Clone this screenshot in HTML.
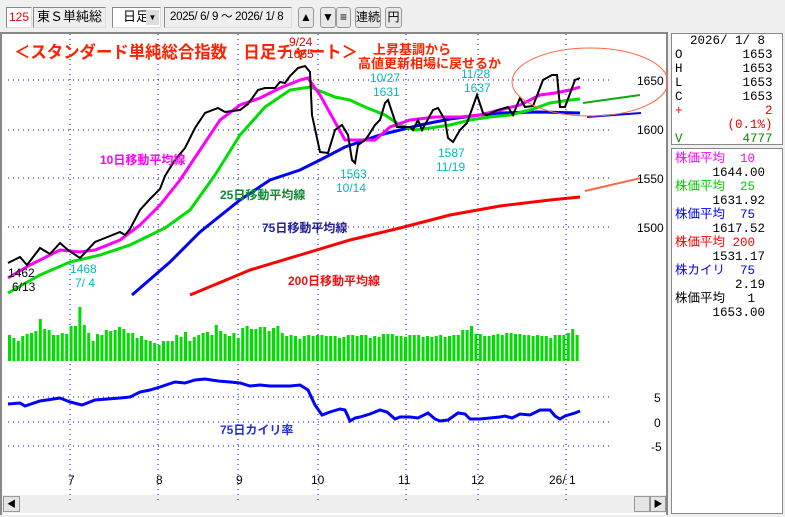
<!DOCTYPE html>
<html><head><meta charset="utf-8"><style>
body{margin:0;width:785px;height:517px;overflow:hidden;background:#f0f0f0;font-family:"Liberation Sans","Noto Sans CJK JP",sans-serif;position:relative}
.b{position:absolute;box-sizing:border-box}
.tb{background:#fff;border:1px solid #888;border-right-color:#ddd;border-bottom-color:#ddd;font-size:13px;line-height:18px;white-space:nowrap;overflow:hidden}
.btn{position:absolute;box-sizing:border-box;background:#e8e8e8;border:1px solid #999;border-radius:3px;font-size:12px;text-align:center;line-height:18px;top:7px;height:21px}
.rp{font-family:"Liberation Mono","Noto Sans CJK JP",monospace;font-size:12.5px;line-height:14px;white-space:pre}
</style></head><body>
<div class="b tb" style="left:6px;top:7px;width:26px;height:21px;color:#e00;text-align:center;font-size:12px">125</div>
<div class="b tb" style="left:33px;top:7px;width:73px;height:21px;background:#eee;padding-left:3px">東Ｓ単純総</div>
<div class="b tb" style="left:112px;top:7px;width:49px;height:21px;padding-left:10px">日足<span style="position:absolute;right:1px;top:2px;width:13px;height:15px;background:#ddd;font-size:8px;line-height:15px;text-align:center">▼</span></div>
<div class="b tb" style="left:164px;top:7px;width:128px;height:21px;background:#eee;padding-left:5px;font-size:11.5px;letter-spacing:-0.3px">2025/ 6/ 9 ～ 2026/ 1/ 8</div>
<div class="btn" style="left:298px;width:16px">▲</div>
<div class="btn" style="left:320px;width:16px">▼</div>
<div class="btn" style="left:336px;width:15px">≡</div>
<div class="btn" style="left:355px;width:26px">連続</div>
<div class="btn" style="left:385px;width:17px">円</div>

<div class="b" style="left:0;top:32px;width:668px;height:483px;background:#fff;border:2px solid #888;border-bottom:none"></div>
<div class="b" style="left:2px;top:495px;width:664px;height:18px;background:#eee"></div>
<div class="b" style="left:3px;top:496px;width:17px;height:16px;background:#e4e4e4;border:1px solid #999;font-size:9px;text-align:center;line-height:14px">◀</div>
<div class="b" style="left:634px;top:496px;width:16px;height:16px;background:#e4e4e4;border:1px solid #999"></div>
<div class="b" style="left:650px;top:496px;width:16px;height:16px;background:#e4e4e4;border:1px solid #999;font-size:9px;text-align:center;line-height:14px">▶</div>

<div class="b" style="left:670px;top:32px;width:115px;height:483px;background:#f0f0f0"></div>
<div class="b rp" style="left:671px;top:33px;width:112px;height:112px;background:#fff;border:1px solid #888;padding:0 3px"><span>  2026/ 1/ 8</span>
O        1653
H        1653
L        1653
C        1653
<span style="color:#e00">+           2</span>
<span style="color:#e00">       (0.1%)</span>
<span style="color:#080">V        4777</span></div>
<div class="b rp" style="left:671px;top:148px;width:112px;height:366px;background:#fff;border:1px solid #888;padding:3px 3px"><span style="color:#f0f">株価平均  10</span>
     1644.00
<span style="color:#0c0">株価平均  25</span>
     1631.92
<span style="color:#00f">株価平均  75</span>
     1617.52
<span style="color:#f00">株価平均 200</span>
     1531.17
<span style="color:#00f">株カイリ  75</span>
        2.19
株価平均   1
     1653.00</div>

<svg class="b" style="left:0;top:0" width="668" height="517" font-family="Liberation Sans,Noto Sans CJK JP,sans-serif">
<g stroke="#00f" stroke-width="1" stroke-dasharray="1,4">
<path d="M70 34V500M158 34V500M238 34V500M318 34V500M406 34V500M478 34V500M566 34V500"/>
<path d="M8 80H610M8 130H610M8 178H610M8 227H610M8 397H610M8 422H610M8 446H610"/>
</g>
<g id="vol" fill="#0d0"></g>
<polyline fill="none" stroke="#f00" stroke-width="3" points="190,295 250,270 300,255 350,240 400,228 450,215 500,206 550,200 580,197"/>
<polyline fill="none" stroke="#00f" stroke-width="3" points="132,295 170,262 200,232 240,200 270,180 300,170 320,160 345,147 380,135 400,130 420,125 450,119 480,115 500,113 540,112 580,113"/>
<polyline fill="none" stroke="#0d0" stroke-width="3" points="8,293 40,275 70,262 100,255 130,245 165,228 190,210 215,175 240,135 265,107 290,90 310,87 335,97 350,100 365,107 385,115 400,125 415,130 430,128 450,125 470,120 490,117 510,115 530,110 550,103 570,100 580,99"/>
<polyline fill="none" stroke="#f0f" stroke-width="3" points="8,278 30,265 60,250 80,252 95,250 120,240 140,225 160,205 180,180 200,150 220,120 240,105 260,98 280,88 300,80 308,78 320,95 345,140 355,140 375,140 390,127 410,120 435,117 460,117 480,115 500,110 520,105 540,95 555,93 570,90 580,87"/>
<polyline fill="none" stroke="#000" stroke-width="2" points="8,263 20,257 27,265 40,248 50,254 60,243 68,250 80,258 95,242 105,238 120,232 125,235 130,229 140,210 150,199 160,189 165,176 175,160 185,148 195,128 205,113 218,108 225,112 240,110 248,104 258,90 265,88 275,88 280,82 285,83 290,76 298,68 305,66 310,72 312,115 320,152 328,153 335,130 342,125 348,135 352,160 355,163 358,145 365,140 368,136 375,125 380,120 385,103 388,100 397,127 410,127 413,130 418,120 422,130 433,110 438,108 445,120 448,138 453,142 460,130 467,123 477,95 483,113 487,115 498,110 508,107 513,115 520,98 525,107 533,106 543,80 552,75 557,75 560,107 565,107 575,80 580,78"/>
<polyline fill="none" stroke="#00f" stroke-width="3" points="8,404 20,403 25,406 40,401 60,398 70,402 82,405 95,400 120,398 130,397 140,392 150,390 160,387 175,382 185,383 195,380 205,379 218,381 230,382 240,383 250,386 260,385 270,386 280,386 290,386 300,385 308,390 315,405 322,415 330,412 340,409 345,410 350,421 355,418 360,417 370,414 380,410 387,412 395,419 400,417 410,417 418,418 428,413 435,419 440,421 448,420 458,413 465,414 470,419 480,419 500,417 505,416 512,418 520,414 530,415 540,410 550,410 555,416 560,419 565,416 575,413 580,411"/>
<path d="M583 103L640 95" stroke="#1a1" stroke-width="2"/>
<path d="M587 117L641 113" stroke="#00f" stroke-width="2"/>
<path d="M585 191L641 178" stroke="#f64" stroke-width="2"/>
<ellipse cx="590" cy="82" rx="78" ry="34" fill="none" stroke="#f64" stroke-width="1"/>
<g font-size="12" font-family="Liberation Sans,sans-serif" fill="#000">
<text x="637" y="85">1650</text><text x="637" y="134">1600</text><text x="637" y="183">1550</text><text x="637" y="232">1500</text>
<text x="654" y="402">5</text><text x="654" y="427">0</text><text x="651" y="451">-5</text>
<text x="68" y="484">7</text><text x="156" y="484">8</text><text x="236" y="484">9</text><text x="311" y="484">10</text><text x="398" y="484">11</text><text x="471" y="484">12</text><text x="549" y="484">26/ 1</text>
</g>
<g font-size="12" fill="#0bb">
<text x="370" y="82">10/27</text><text x="373" y="96">1631</text>
<text x="461" y="78">11/28</text><text x="464" y="92">1637</text>
<text x="438" y="157">1587</text><text x="436" y="171">11/19</text>
<text x="340" y="178">1563</text><text x="336" y="192">10/14</text>
<text x="70" y="273">1468</text><text x="75" y="287">7/ 4</text>
</g>
<g font-size="12" fill="#000"><text x="8" y="277">1462</text><text x="12" y="291">6/13</text></g>
<g font-size="12" fill="#e00"><text x="289" y="46">9/24</text><text x="287" y="58">1665</text></g>
<text x="14" y="58" font-size="17" font-weight="bold" fill="#f20" textLength="344" lengthAdjust="spacingAndGlyphs">＜スタンダード単純総合指数　日足チャート＞</text>
<text x="373" y="54" font-size="13" font-weight="bold" fill="#f20">上昇基調から</text>
<text x="358" y="68" font-size="13" font-weight="bold" fill="#f20">高値更新相場に戻せるか</text>
<g font-size="12" font-weight="bold">
<text x="100" y="164" fill="#f0f">10日移動平均線</text>
<text x="220" y="199" fill="#183">25日移動平均線</text>
<text x="262" y="232" fill="#229">75日移動平均線</text>
<text x="288" y="285" fill="#e11">200日移動平均線</text>
<text x="220" y="434" fill="#23d">75日カイリ率</text>
</g>
</svg>
<script>
var h=[26,23,20,25,27,28,30,42,32,31,26,26,28,27,35,35,54,36,28,20,27,26,31,30,31,34,32,28,28,23,25,21,20,18,16,20,20,20,26,24,29,20,24,26,28,29,26,36,30,27,25,28,23,33,35,32,32,34,34,30,33,35,28,25,26,25,22,25,26,25,26,26,25,25,25,23,24,26,26,25,26,26,23,25,24,27,27,27,25,25,24,26,26,26,24,25,24,25,26,24,25,26,26,31,31,35,27,27,25,25,26,27,26,28,28,27,27,26,26,25,26,25,25,23,26,26,26,28,32,26];
var g=document.getElementById('vol'),s='';
for(var i=0;i<h.length;i++){var x=8+i*4.4;s+='<rect x="'+x.toFixed(1)+'" y="'+(361-h[i])+'" width="3" height="'+h[i]+'"/>';}
g.innerHTML=s;
</script>
</body></html>
